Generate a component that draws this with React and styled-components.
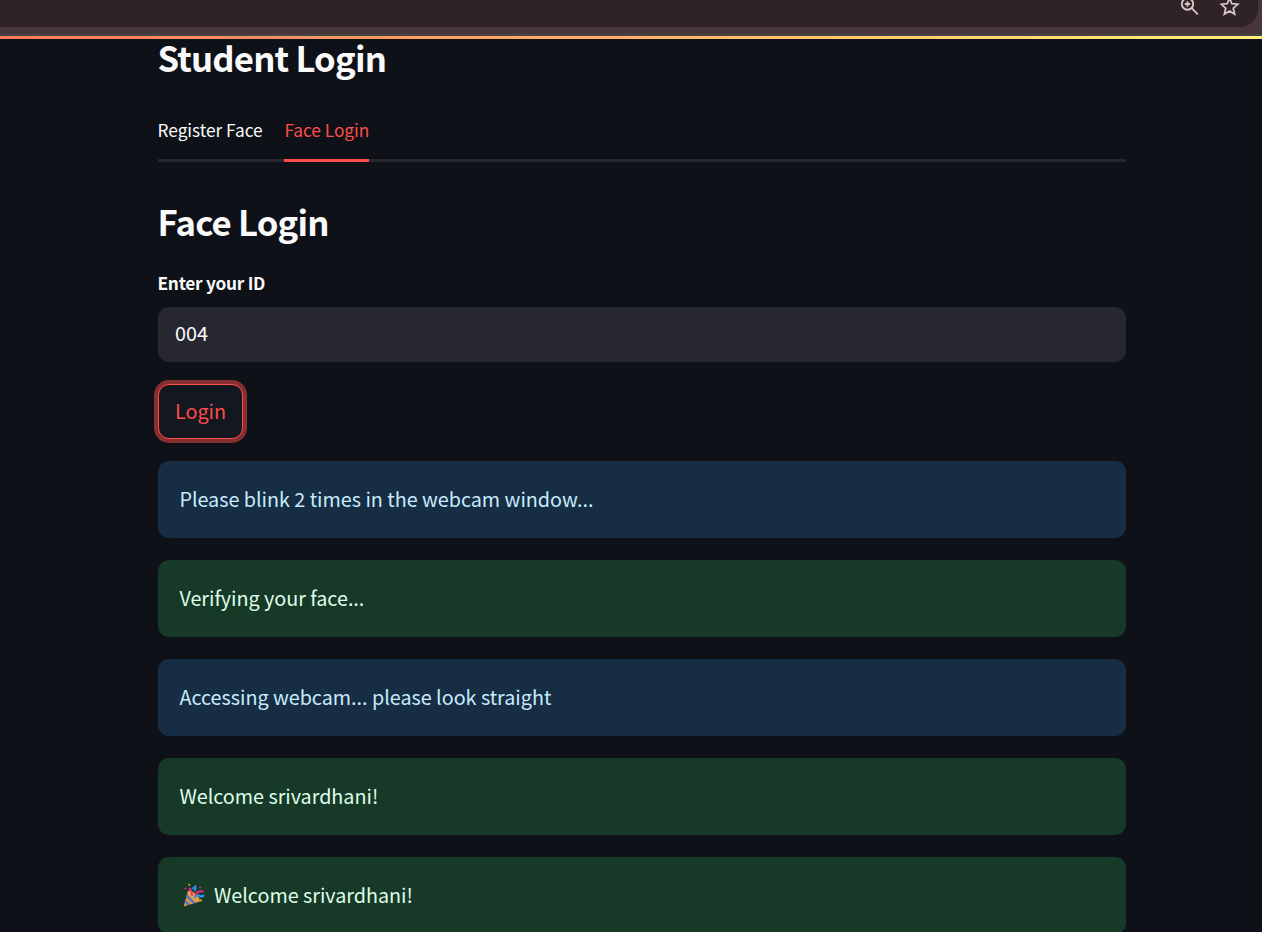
import React from "react";
import styled, { createGlobalStyle } from "styled-components";

const GlobalStyle = createGlobalStyle`
  html, body { margin: 0; height: 100%; overflow: hidden; background: #0e1117; }
  *, *::before, *::after { box-sizing: border-box; }
  body, button, input { font-family: "Noto Sans CJK SC", "Noto Sans", sans-serif; color: #fafafa; }
`;

const Page = styled.div`
  height: 932px;
  overflow: hidden;
  background: #0e1117;
`;

const BrowserEdge = styled.div`
  height: 36px;
  background: #46363a;
  border-bottom: 2px solid #454144;
`;

const BrowserBar = styled.div`
  display: flex;
  justify-content: flex-end;
  gap: 20px;
  width: 1258px;
  height: 27px;
  padding-right: 18px;
  background: #2f2325;
  border-bottom-right-radius: 18px;
  overflow: hidden;
`;

const BarIcon = styled.svg`
  flex: none;
  display: block;
  width: 20px;
  height: 20px;
  margin-top: -4px;
`;

const Decoration = styled.div`
  height: 3px;
  background: linear-gradient(90deg, #ff7a5c 0%, #ffab63 45%, #fff07a 100%);
`;

const Main = styled.main`
  width: 968px;
  margin-left: 158px;
`;

const Heading = styled.h2`
  margin: 0 0 0 -0.5px;
  font-size: 34.7px;
  line-height: ${(p) => p.$line}px;
  height: 46px;
  font-weight: 700;
  letter-spacing: -0.82px;
  white-space: nowrap;
`;

const Tabs = styled.div`
  display: flex;
  gap: 22px;
  height: 55px;
  margin-top: 22px;
  border-bottom: 3px solid #26282e;
`;

const Tab = styled.button`
  width: ${(p) => p.$width}px;
  height: 55px;
  padding: 0 0 6px;
  border: 0;
  border-bottom: 3px solid ${(p) => (p.$active ? "#ff4b4b" : "transparent")};
  background: transparent;
  color: ${(p) => (p.$active ? "#ff4b4b" : "#fafafa")};
  font-size: 17.3px;
  line-height: 30px;
  letter-spacing: -0.02px;
  text-align: left;
  text-indent: ${(p) => (p.$active ? 0 : -0.5)}px;
  white-space: nowrap;
`;

const TabPanel = styled.section`
  padding-top: 38px;
`;

const Label = styled.label`
  display: block;
  height: 30px;
  margin-top: 22px;
  font-size: 17.3px;
  line-height: 30px;
  font-weight: 700;
  letter-spacing: -0.28px;
  text-indent: -0.5px;
`;

const Field = styled.input`
  display: block;
  width: 100%;
  height: 55px;
  margin-top: 9px;
  padding: 0 17px 5px;
  border: 0;
  border-radius: 11px;
  outline: 0;
  background: #262730;
  font-size: 19.8px;
`;

const LoginButton = styled.button`
  display: block;
  width: 85px;
  height: 55px;
  margin: 22px 0;
  padding: 0 0 2px;
  border: 1px solid #ff4b4b;
  border-radius: 11px;
  background: #131720;
  box-shadow: 0 0 0 4px rgba(255, 75, 75, 0.5);
  color: #ff4b4b;
  font-size: 19.8px;
  line-height: 30px;
`;

const Alerts = styled.div`
  display: flex;
  flex-direction: column;
  gap: 22px;
`;

const Alert = styled.div`
  display: flex;
  align-items: center;
  flex: none;
  height: 77px;
  padding: 0 21.4px 2px;
  border-radius: 11px;
  background: ${(p) => (p.$kind === "info" ? "#172d43" : "#173928")};
  color: ${(p) => (p.$kind === "info" ? "#c7ebff" : "#dffde9")};
  font-size: 19.8px;
  line-height: 36px;
  letter-spacing: -0.025px;
  white-space: nowrap;
`;

const Popper = styled.svg`
  flex: none;
  width: 22px;
  height: 24px;
  margin: 0 8.8px 0 3.8px;
`;

function PartyPopper() {
  return (
    <Popper viewBox="0 0 22 24" fill="none" aria-label="party popper">
      <path d="M5 8 17 18.5 1.5 23.2Q.5 23.4 1 22Z" fill="#d99a3e" />
      <path d="M4 11.5 12.6 19.8 9.8 20.6 3.2 14.2ZM2.5 17 7.3 21.4 4.7 22.2 1.7 19.6Z" fill="#546fd6" />
      <ellipse cx="10.8" cy="13.2" rx="7.7" ry="3.1" transform="rotate(43 10.8 13.2)" fill="#e3a23d" />
      <path d="M9 12.5Q9.5 8.2 6 5M12 12.5Q14 7.5 20.5 8.5" stroke="#ec268d" strokeWidth="2" />
      <path d="M8.5 5.5 13 1.5Q14.5 5 12.7 9.2Q11.8 6.5 8.5 5.5Z" fill="#238edb" />
      <path d="M11.5 15Q14.5 11 17 13Q18 14.2 21.3 12.3" stroke="#3295e8" strokeWidth="2.2" />
      <circle cx="6.3" cy="1.7" r="1" fill="#e6aa3e" />
      <circle cx="18" cy="17.4" r="1.1" fill="#e6aa3e" />
      <circle cx="2.3" cy="5.5" r="1" fill="#d92b80" />
      <circle cx="17.2" cy="4.4" r="1" fill="#d92b80" />
    </Popper>
  );
}

const messages = [
  { kind: "info", text: "Please blink 2 times in the webcam window..." },
  { kind: "success", text: "Verifying your face..." },
  { kind: "info", text: "Accessing webcam... please look straight" },
  { kind: "success", text: "Welcome srivardhani!" },
  { kind: "success", text: "Welcome srivardhani!", party: true },
];

export default function App() {
  return (
    <Page>
      <GlobalStyle />
      <BrowserEdge>
        <BrowserBar>
          <BarIcon viewBox="0 0 20 20" fill="none" stroke="#d4c5c7" strokeWidth="1.9">
            <circle cx="7.5" cy="8" r="5.7" />
            <path d="m11.7 12.2 6.1 6.1M7.5 5.2v5.6M4.7 8h5.6" />
          </BarIcon>
          <BarIcon viewBox="0 0 20 20" fill="none" stroke="#d4c5c7" strokeWidth="1.8">
            <path d="m9.5 2.2 2.3 5.5 6 .5-4.5 4 1.3 5.9-5.1-3.1-5.1 3.1 1.3-5.9-4.5-4 6-.5Z" />
          </BarIcon>
        </BrowserBar>
      </BrowserEdge>
      <Decoration />
      <Main>
        <Heading $line={37}>Student Login</Heading>
        <Tabs role="tablist">
          <Tab $width={104.4}>Register Face</Tab>
          <Tab $width={85} $active>Face Login</Tab>
        </Tabs>
        <TabPanel>
          <Heading $line={43}>Face Login</Heading>
          <Label htmlFor="student-id">Enter your ID</Label>
          <Field id="student-id" defaultValue="004" />
          <LoginButton>Login</LoginButton>
          <Alerts>
            {messages.map((m, i) => (
              <Alert key={i} $kind={m.kind}>
                {m.party && <PartyPopper />}
                {m.text}
              </Alert>
            ))}
          </Alerts>
        </TabPanel>
      </Main>
    </Page>
  );
}
